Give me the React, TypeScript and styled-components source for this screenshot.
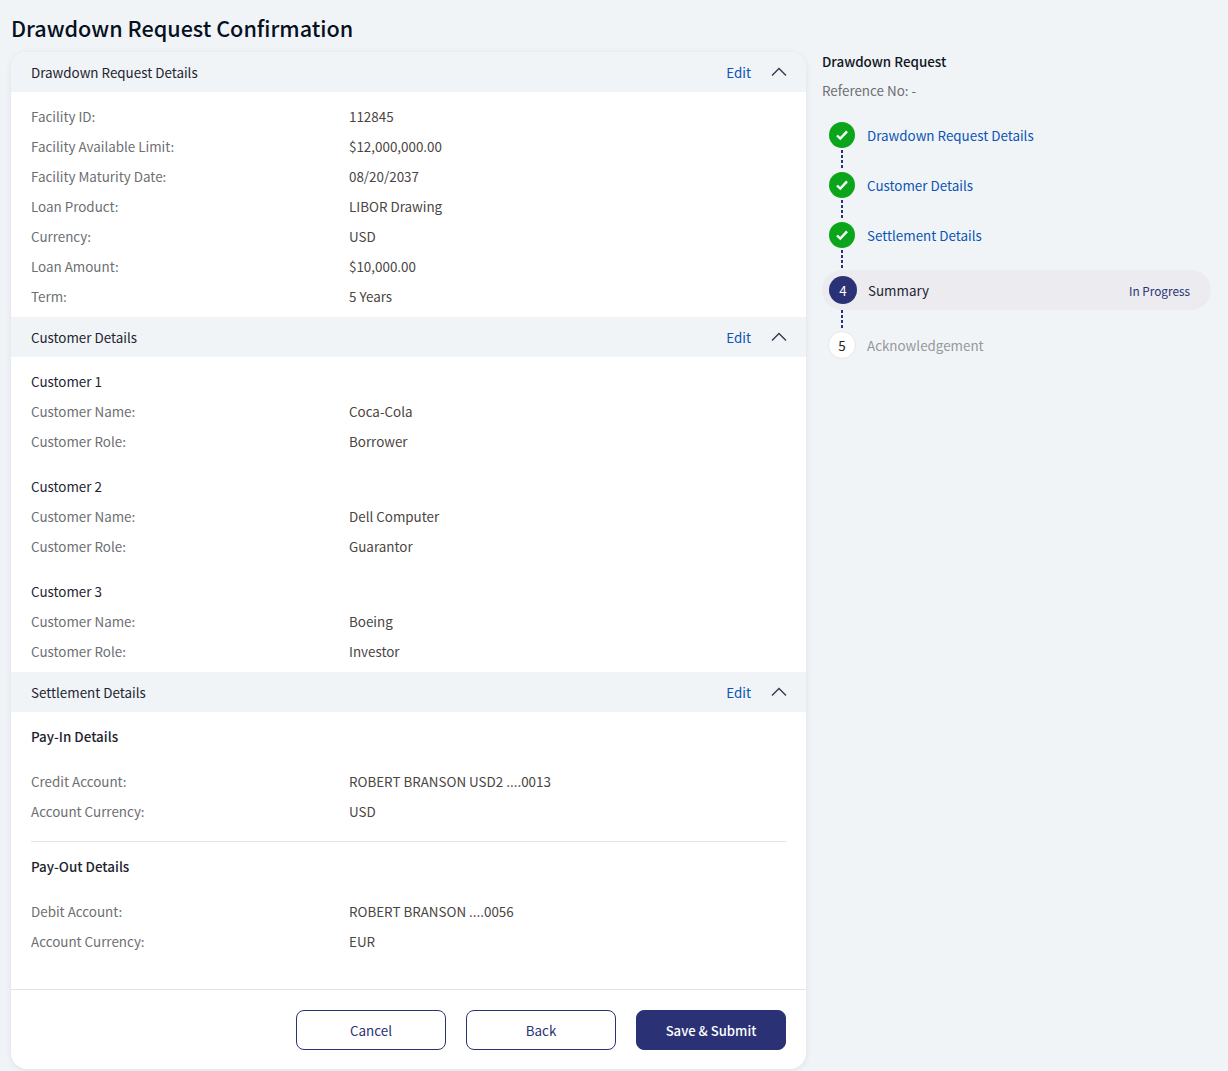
import styled, { createGlobalStyle } from 'styled-components';

const GlobalStyle = createGlobalStyle`
  html, body { margin: 0; padding: 0; background: #f1f4f7; }
  body { font-family: "Noto Sans CJK SC", "Noto Sans", sans-serif; font-size: 13.4px; color: #212121; }
  * { box-sizing: border-box; }
`;

const Page = styled.div`
  width: 1228px; height: 1071px; padding: 0 17px 2px 11px; display: flex; flex-direction: column; overflow: hidden;
`;
const Title = styled.h1`
  margin: 0; height: 52px; padding-top: 13px; font-size: 21.6px; line-height: 30px; font-weight: 500; color: #06101f;
`;
const Columns = styled.div`
  flex: 1; display: flex; gap: 16px; min-height: 0;
`;
const Card = styled.main`
  width: 795px; background: #fff; border-radius: 16px; overflow: hidden; display: flex; flex-direction: column;
  box-shadow: 0 1px 6px rgba(40, 50, 90, 0.1);
`;
const SectionHeader = styled.header`
  height: 40px; flex: none; background: #f1f4f7; padding: 0 19px 0 20px; display: flex; align-items: center; color: #1d2430;
`;
const SectionName = styled.span`
  flex: 1;
`;
const EditLink = styled.a`
  color: #0a55b5; margin-right: 20px; cursor: pointer;
`;
const Body = styled.div<{ $bottom: number }>`
  padding: 9px 20px ${p => p.$bottom}px;
`;
const Row = styled.div`
  display: flex; height: 30px; align-items: center;
`;
const Label = styled.span`
  width: 318px; flex: none; color: #6d6f73;
`;
const Value = styled.span`
  color: #4a4542;
`;
const GroupTitle = styled.div<{ $gap?: boolean }>`
  height: 30px; display: flex; align-items: center; color: #1d2430;
  margin-top: ${p => (p.$gap ? 15 : 0)}px;
`;
const SubTitle = styled.div`
  height: 30px; margin-bottom: 15px; display: flex; align-items: center; font-weight: 500; color: #1d2430;
`;
const Divider = styled.hr`
  margin: 15px 0 9px; border: 0; border-top: 1px solid #e2e3e6;
`;
const Footer = styled.footer`
  margin-top: auto; height: 80px; border-top: 1px solid #e2e3e6; padding: 20px 20px 0; display: flex; justify-content: flex-end; gap: 20px;
`;
const Button = styled.button<{ $primary?: boolean }>`
  width: 150px; height: 40px; border-radius: 8px; border: 1px solid #2a3275; font: inherit; cursor: pointer;
  background: ${p => (p.$primary ? '#2a3275' : '#fff')};
  color: ${p => (p.$primary ? '#fff' : '#2a3275')};
  font-weight: ${p => (p.$primary ? 500 : 400)};
  font-size: ${p => (p.$primary ? 13.1 : 13.4)}px;
`;
const Side = styled.aside`
  flex: 1; display: flex; flex-direction: column; margin-top: -1px;
`;
const SideTitle = styled.div`
  height: 20px; font-weight: 500; color: #10151f; line-height: 20px;
`;
const Reference = styled.div`
  height: 20px; margin-top: 9px; margin-bottom: 20px; color: #6d6f73; line-height: 20px;
`;
const Step = styled.div<{ $pending?: boolean }>`
  height: 30px; display: flex; align-items: center;
  gap: ${p => (p.$pending ? 11 : 12)}px;
  padding-left: ${p => (p.$pending ? 6 : 7)}px;
`;
const ActiveStep = styled.div`
  height: 40px; display: flex; align-items: center; gap: 11px; padding: 0 21px 0 7px; border-radius: 20px; background: #ebebf0; color: #1d2430;
`;
const StepLink = styled.a`
  color: #0a55b5; cursor: pointer;
`;
const StepMuted = styled.span`
  color: #96989c;
`;
const DoneCircle = styled.span`
  width: 26px; height: 26px; border-radius: 50%; background: #0aa51b; display: flex; align-items: center; justify-content: center; flex: none;
`;
const NumberCircle = styled.span<{ $active?: boolean }>`
  width: 28px; height: 28px; border-radius: 50%; display: flex; align-items: center; justify-content: center; flex: none;
  background: ${p => (p.$active ? '#2a3275' : '#fff')};
  color: ${p => (p.$active ? '#fff' : '#212121')};
  border: ${p => (p.$active ? 'none' : '1px solid #e4e6ea')};
`;
const Connector = styled.div`
  width: 2px; height: 20px; margin-left: 19px;
  background: repeating-linear-gradient(to bottom, #2a3275 0 3px, transparent 3px 5px);
`;
const Status = styled.span`
  margin-left: auto; font-size: 11.8px; color: #2a3275;
`;

const Chevron = () => (
  <svg width="16" height="10" viewBox="0 0 16 10" fill="none" stroke="#333a50" strokeWidth="1.4">
    <path d="M1 8.5 8 1.5l7 7" />
  </svg>
);

const Check = () => (
  <svg width="14" height="12" viewBox="0 0 14 12" fill="none" stroke="#fff" strokeWidth="2.4">
    <path d="M2 6.5 5.3 9.6 12 2.4" />
  </svg>
);

const Section = ({ name }: { name: string }) => (
  <SectionHeader>
    <SectionName>{name}</SectionName>
    <EditLink>Edit</EditLink>
    <Chevron />
  </SectionHeader>
);

const Field = ({ label, value }: { label: string; value: string }) => (
  <Row>
    <Label>{label}</Label>
    <Value>{value}</Value>
  </Row>
);

const facility = [
  ['Facility ID:', '112845'],
  ['Facility Available Limit:', '$12,000,000.00'],
  ['Facility Maturity Date:', '08/20/2037'],
  ['Loan Product:', 'LIBOR Drawing'],
  ['Currency:', 'USD'],
  ['Loan Amount:', '$10,000.00'],
  ['Term:', '5 Years'],
];

const customers = [
  ['Coca-Cola', 'Borrower'],
  ['Dell Computer', 'Guarantor'],
  ['Boeing', 'Investor'],
];

const App = () => (
  <Page>
    <GlobalStyle />
    <Title>Drawdown Request Confirmation</Title>
    <Columns>
      <Card>
        <Section name="Drawdown Request Details" />
        <Body $bottom={6}>
          {facility.map(([label, value]) => (
            <Field key={label} label={label} value={value} />
          ))}
        </Body>
        <Section name="Customer Details" />
        <Body $bottom={6}>
          {customers.map(([name, role], i) => (
            <div key={name}>
              <GroupTitle $gap={i > 0}>Customer {i + 1}</GroupTitle>
              <Field label="Customer Name:" value={name} />
              <Field label="Customer Role:" value={role} />
            </div>
          ))}
        </Body>
        <Section name="Settlement Details" />
        <Body $bottom={0}>
          <SubTitle>Pay-In Details</SubTitle>
          <Field label="Credit Account:" value="ROBERT BRANSON USD2 ....0013" />
          <Field label="Account Currency:" value="USD" />
          <Divider />
          <SubTitle>Pay-Out Details</SubTitle>
          <Field label="Debit Account:" value="ROBERT BRANSON ....0056" />
          <Field label="Account Currency:" value="EUR" />
        </Body>
        <Footer>
          <Button>Cancel</Button>
          <Button>Back</Button>
          <Button $primary>Save &amp; Submit</Button>
        </Footer>
      </Card>
      <Side>
        <SideTitle>Drawdown Request</SideTitle>
        <Reference>Reference No: -</Reference>
        <Step>
          <DoneCircle><Check /></DoneCircle>
          <StepLink>Drawdown Request Details</StepLink>
        </Step>
        <Connector />
        <Step>
          <DoneCircle><Check /></DoneCircle>
          <StepLink>Customer Details</StepLink>
        </Step>
        <Connector />
        <Step>
          <DoneCircle><Check /></DoneCircle>
          <StepLink>Settlement Details</StepLink>
        </Step>
        <Connector />
        <ActiveStep>
          <NumberCircle $active>4</NumberCircle>
          <span>Summary</span>
          <Status>In Progress</Status>
        </ActiveStep>
        <Connector />
        <Step $pending>
          <NumberCircle>5</NumberCircle>
          <StepMuted>Acknowledgement</StepMuted>
        </Step>
      </Side>
    </Columns>
  </Page>
);

export default App;
